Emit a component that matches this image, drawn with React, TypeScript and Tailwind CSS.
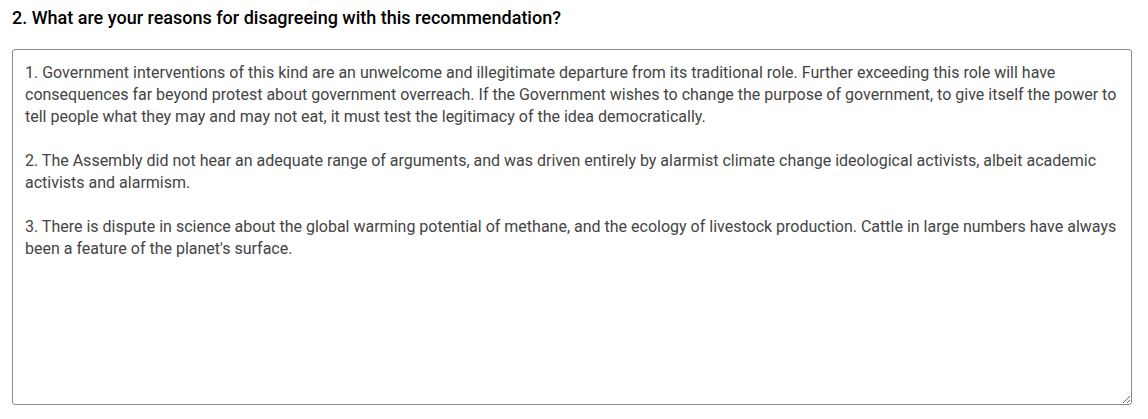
const text = `1. Government interventions of this kind are an unwelcome and illegitimate departure from its traditional role. Further exceeding this role will have consequences far beyond protest about government overreach. If the Government wishes to change the purpose of government, to give itself the power to tell people what they may and may not eat, it must test the legitimacy of the idea democratically.

2. The Assembly did not hear an adequate range of arguments, and was driven entirely by alarmist climate change ideological activists, albeit academic activists and alarmism.

3. There is dispute in science about the global warming potential of methane, and the ecology of livestock production. Cattle in large numbers have always been a feature of the planet's surface.`;

export default function App() {
  return (
    <div className="min-h-screen bg-white px-3 pt-[6px] font-['Roboto',sans-serif]">
      <h2 className="text-[18px] font-medium leading-6 text-black">
        2. What are your reasons for disagreeing with this recommendation?
      </h2>
      <textarea
        defaultValue={text}
        className="mt-[19px] block h-[356px] w-[1120px] rounded-[3px] border border-[#8a8a8a] bg-white px-3 py-3 text-[16px] leading-[22px] text-[#444] outline-none"
      />
    </div>
  );
}
